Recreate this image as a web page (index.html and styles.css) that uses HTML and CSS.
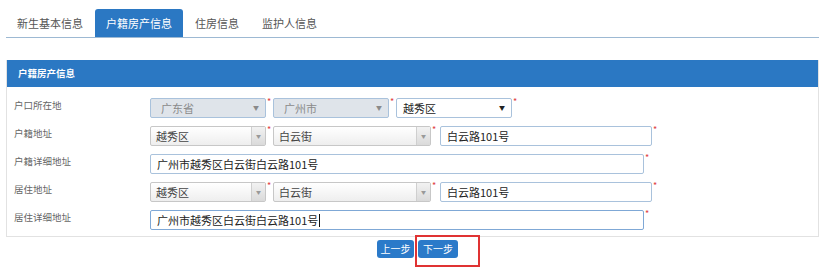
FILE: index.html
```html
<!DOCTYPE html>
<html lang="zh-CN">
<head>
    <meta charset="UTF-8">
    <title>户籍房产信息</title>
    <link rel="stylesheet" href="styles.css">
</head>
<body>
    <div class="page">
        <ul class="tabs">
            <li>新生基本信息</li>
            <li class="active">户籍房产信息</li>
            <li>住房信息</li>
            <li>监护人信息</li>
        </ul>

        <div class="panel">
            <div class="panel-head">户籍房产信息</div>
            <div class="panel-body">
                <div class="form-row">
                    <label>户口所在地</label>
                    <div class="fields">
                        <div class="select disabled w116"><span>广东省</span><i class="caret">▼</i></div><i class="req">*</i>
                        <div class="select disabled w115"><span>广州市</span><i class="caret">▼</i></div><i class="req">*</i>
                        <div class="select plain w115"><span>越秀区</span><i class="caret dark">▼</i></div><i class="req">*</i>
                    </div>
                </div>
                <div class="form-row">
                    <label>户籍地址</label>
                    <div class="fields">
                        <div class="select combo w115"><span>越秀区</span><b class="btn-arrow">▼</b></div><i class="req">*</i>
                        <div class="select combo w158"><span>白云街</span><b class="btn-arrow">▼</b></div><i class="req wide">*</i>
                        <div class="input w212">白云路101号</div><i class="req">*</i>
                    </div>
                </div>
                <div class="form-row">
                    <label>户籍详细地址</label>
                    <div class="fields">
                        <div class="input w494">广州市越秀区白云街白云路101号</div><i class="req">*</i>
                    </div>
                </div>
                <div class="form-row">
                    <label>居住地址</label>
                    <div class="fields">
                        <div class="select combo w115"><span>越秀区</span><b class="btn-arrow">▼</b></div><i class="req">*</i>
                        <div class="select combo w158"><span>白云街</span><b class="btn-arrow">▼</b></div><i class="req wide">*</i>
                        <div class="input w212">白云路101号</div><i class="req">*</i>
                    </div>
                </div>
                <div class="form-row">
                    <label>居住详细地址</label>
                    <div class="fields">
                        <div class="input w494 focus">广州市越秀区白云街白云路101号<span class="cursor"></span></div><i class="req">*</i>
                    </div>
                </div>
            </div>
        </div>

        <div class="actions">
            <button class="btn prev">上一步</button>
            <span class="marked">
                <button class="btn next">下一步</button>
                <span class="mark-box"></span>
            </span>
        </div>
    </div>
</body>
</html>
```

FILE: styles.css
```css
html, body {
    min-height: 100%;
}
body {
    margin: 0;
    background: #fff;
    font-family: "Microsoft YaHei", "Noto Sans CJK SC", sans-serif;
    color: #333;
}
.page {
    padding: 9px 4px 0 6px;
}
.tabs {
    list-style: none;
    margin: 0;
    padding: 0;
    display: flex;
    border-bottom: 1px solid #9db9d3;
    height: 28px;
}
.tabs li {
    font-size: 11px;
    line-height: 28px;
    padding: 0 11px;
    margin-right: 1px;
    color: #555;
    border-radius: 3px 3px 0 0;
}
.tabs li.active {
    background: #2b78c3;
    color: #fff;
}
.panel {
    margin-top: 22px;
    border: 1px solid #e2e2e2;
    border-top: none;
}
.panel-head {
    background: #2b78c3;
    color: #fff;
    font-size: 9.5px;
    font-weight: bold;
    height: 27px;
    line-height: 27px;
    padding-left: 11px;
}
.panel-body {
    padding: 11px 0 6px 7px;
}
.form-row {
    display: flex;
    margin-bottom: 8px;
}
.form-row:last-child {
    margin-bottom: 0;
}
.form-row label {
    width: 136px;
    font-size: 9.5px;
    color: #666;
    line-height: 15px;
}
.fields {
    display: flex;
    align-items: flex-start;
}
.req {
    font-style: normal;
    color: #e04040;
    font-size: 9px;
    line-height: 8px;
    width: 7px;
    padding-left: 1px;
    box-sizing: border-box;
}
.req.wide {
    width: 9px;
}
.select, .input {
    box-sizing: border-box;
    height: 20px;
    border: 1px solid #a9c2dc;
    border-radius: 2px;
    font-size: 11px;
    line-height: 18px;
    display: flex;
    align-items: center;
    background: #fff;
}
.select span {
    flex: 1;
}
.select.disabled {
    background: #dfe4ea;
    color: #8a8a8a;
    padding-left: 10px;
}
.select.plain {
    padding-left: 6px;
    color: #222;
}
.caret {
    font-style: normal;
    font-size: 6px;
    color: #8a8a8a;
    width: 12px;
}
.caret.dark {
    color: #222;
}
.select.combo {
    border-color: #c7c7c7;
    padding-left: 5px;
    background: linear-gradient(#ffffff, #eeeeee);
    color: #444;
}
.btn-arrow {
    width: 13px;
    height: 18px;
    border-left: 1px solid #cfcfcf;
    background: linear-gradient(#f2f2f2, #dadada);
    color: #999;
    font-size: 5px;
    font-weight: normal;
    text-align: center;
    line-height: 18px;
}
.input {
    padding-left: 6px;
    color: #222;
}
.input.focus {
    border-color: #7fa8d6;
}
.cursor {
    display: inline-block;
    width: 1px;
    height: 13px;
    background: #111;
    margin-left: 1px;
}
.w115 { width: 116px; }
.w116 { width: 116px; }
.w158 { width: 158px; }
.w212 { width: 212px; }
.w494 { width: 494px; }
.actions {
    display: flex;
    justify-content: center;
    align-items: flex-start;
    gap: 4px;
    margin-top: 3px;
    padding: 0 0 14px 10px;
}
.btn {
    display: block;
    font-family: inherit;
    font-size: 10px;
    color: #fff;
    background: #2b7ac9;
    border: none;
    border-radius: 3px;
    height: 18px;
    padding: 0;
    line-height: 18px;
    text-align: center;
}
.prev {
    width: 37px;
}
.next {
    width: 40px;
}
.marked {
    position: relative;
    display: flex;
}
.mark-box {
    position: absolute;
    left: -3px;
    top: -5px;
    width: 61px;
    height: 28px;
    border: 2px solid #e03333;
}
```
